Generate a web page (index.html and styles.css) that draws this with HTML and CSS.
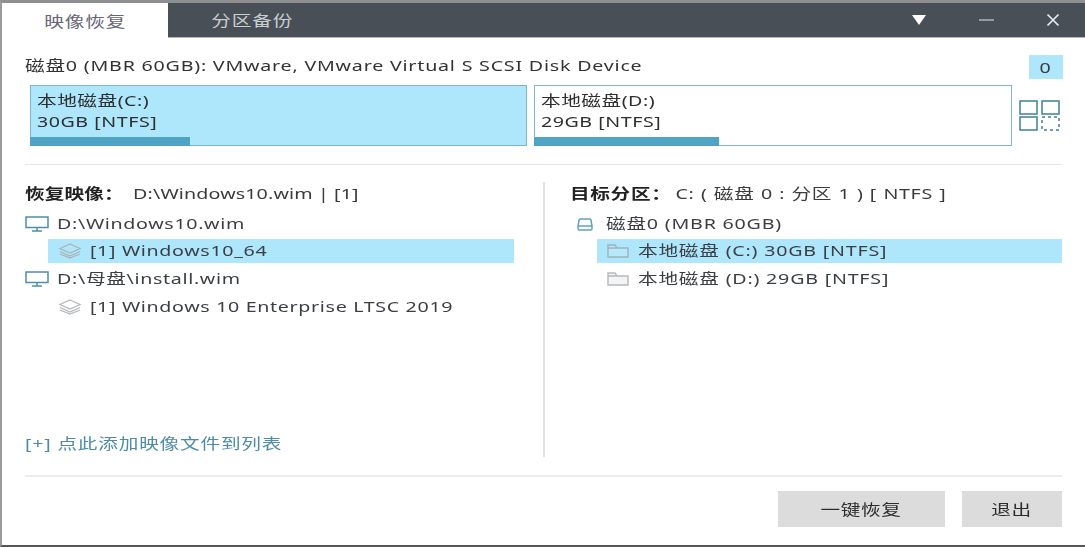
FILE: index.html
```html
<!DOCTYPE html>
<html lang="zh-CN">
<head>
<meta charset="utf-8">
<title>映像恢复</title>
<link rel="stylesheet" href="styles.css">
</head>
<body>
<div class="window">
  <header class="titlebar">
    <div class="tab active"><span class="t tc">映像恢复</span></div>
    <div class="tab"><span class="t tc">分区备份</span></div>
    <div class="controls">
      <svg class="ctl" width="16" height="12" viewBox="0 0 16 12"><path d="M1 1h14L8 11z" fill="#fff"/></svg>
      <svg class="ctl" width="16" height="12" viewBox="0 0 16 12"><path d="M0 6h15" stroke="#aab0b5" stroke-width="1.6"/></svg>
      <svg class="ctl" width="14" height="14" viewBox="0 0 14 14"><path d="M1.500 1.500l11 11M12.500 1.500l-11 11" stroke="#e8ebed" stroke-width="1.700" fill="none"/></svg>
    </div>
  </header>
  <main class="content">
    <div class="disk-head">
      <span class="t">磁盘0 (MBR 60GB): VMware, VMware Virtual S SCSI Disk Device</span>
      <span class="badge"><span class="t tc">0</span></span>
    </div>
    <div class="parts">
      <div class="part selected part-c">
        <div class="part-label"><span class="t">本地磁盘(C:)</span></div>
        <div class="part-label"><span class="t">30GB [NTFS]</span></div>
        <div class="usage" style="width:160px"></div>
      </div>
      <div class="part part-d">
        <div class="part-label"><span class="t">本地磁盘(D:)</span></div>
        <div class="part-label"><span class="t">29GB [NTFS]</span></div>
        <div class="usage" style="width:185px"></div>
      </div>
      <svg class="layout-icon" width="42" height="31" viewBox="0 0 42 31">
        <g fill="none" stroke="#3f7f99" stroke-width="1.500">
          <rect x="1" y="1" width="17" height="13"/>
          <rect x="23" y="1" width="17" height="13"/>
          <rect x="1" y="17" width="17" height="13"/>
          <rect x="23" y="17" width="17" height="13" stroke-dasharray="3 3"/>
        </g>
      </svg>
    </div>
    <div class="rule"></div>
    <div class="panes">
      <section class="pane left">
        <div class="pane-title"><span class="t"><b>恢复映像：</b>D:\Windows10.wim | [1]</span></div>
        <div class="row">
          <svg class="ico" width="24" height="16" viewBox="0 0 24 16"><g fill="none" stroke="#4f8ea8" stroke-width="1.500"><rect x="1" y="1" width="22" height="10.500"/><path d="M12 11.500v3M7 15h10"/></g></svg>
          <span class="t">D:\Windows10.wim</span>
        </div>
        <div class="row sub selected">
          <svg class="ico" width="24" height="16" viewBox="0 0 24 16"><g fill="none" stroke="#a9b4b8" stroke-width="1.300"><path d="M12 1l10 4.500-10 4.500L2 5.500z"/><path d="M2 8.500l10 4.500 10-4.500M2 11l10 4 10-4"/></g></svg>
          <span class="t">[1] Windows10_64</span>
        </div>
        <div class="row">
          <svg class="ico" width="24" height="16" viewBox="0 0 24 16"><g fill="none" stroke="#4f8ea8" stroke-width="1.500"><rect x="1" y="1" width="22" height="10.500"/><path d="M12 11.500v3M7 15h10"/></g></svg>
          <span class="t">D:\母盘\install.wim</span>
        </div>
        <div class="row sub">
          <svg class="ico" width="24" height="16" viewBox="0 0 24 16"><g fill="none" stroke="#b4b9bb" stroke-width="1.300"><path d="M12 1l10 4.500-10 4.500L2 5.500z"/><path d="M2 8.500l10 4.500 10-4.500M2 11l10 4 10-4"/></g></svg>
          <span class="t">[1] Windows 10 Enterprise LTSC 2019</span>
        </div>
        <div class="add"><span class="t">[+] 点此添加映像文件到列表</span></div>
      </section>
      <section class="pane right">
        <div class="pane-title"><span class="t"><b>目标分区：</b>C: ( 磁盘 0 : 分区 1 ) [ NTFS ]</span></div>
        <div class="row">
          <svg class="ico disk" width="16" height="13" viewBox="0 0 16 13"><g fill="none" stroke="#5fa0bd" stroke-width="1.500"><path d="M3.500 1h9a1.500 1.500 0 0 1 1.500 1.500L15 8v2.500a1.500 1.500 0 0 1-1.500 1.500h-11A1.500 1.500 0 0 1 1 10.500V8l1-5.500A1.500 1.500 0 0 1 3.500 1z"/><path d="M1 8h14"/></g></svg>
          <span class="t">磁盘0 (MBR 60GB)</span>
        </div>
        <div class="row sub selected">
          <svg class="ico folder" width="22" height="14" viewBox="0 0 22 14"><path d="M1 13V1h7l2 3h11v9zM1 4h9" fill="#ffffff22" stroke="#9fb3bb" stroke-width="1.400"/></svg>
          <span class="t">本地磁盘 (C:) 30GB [NTFS]</span>
        </div>
        <div class="row sub">
          <svg class="ico folder" width="22" height="14" viewBox="0 0 22 14"><path d="M1 13V1h7l2 3h11v9zM1 4h9" fill="#f4f4f4" stroke="#b4b9bb" stroke-width="1.400"/></svg>
          <span class="t">本地磁盘 (D:) 29GB [NTFS]</span>
        </div>
      </section>
    </div>
    <div class="rule foot-rule"></div>
    <footer class="foot">
      <button class="btn primary"><span class="t tc">一键恢复</span></button>
      <button class="btn exit"><span class="t tc">退出</span></button>
    </footer>
  </main>
</div>
</body>
</html>
```
FILE: styles.css
```css
* { box-sizing: border-box; }
html, body { margin: 0; height: 100%; background: #fff; overflow: hidden; }
body {
  font-family: "Noto Sans", "Noto Sans CJK SC", sans-serif;
  font-size: 15px;
  line-height: 20px;
  color: #3a3a3a;
}
.t {
  display: inline-block;
  white-space: nowrap;
  transform: scaleX(1.31);
  transform-origin: left center;
}
.tc { transform-origin: center; }
.t b { font-weight: 700; color: #222; margin-right: 3px; }
.window {
  height: 547px;
  display: flex;
  flex-direction: column;
  border-top: 3px solid #8d8f91;
  border-left: 2px solid #9a9a9a;
  border-bottom: 2px solid #555;
  filter: blur(0.4px);
}
.titlebar {
  height: 35px;
  flex: none;
  display: flex;
  background: #484f57;
  border-bottom: 1px solid #b5b8ba;
  color: #c9ced2;
}
.tab {
  width: 166px;
  display: flex;
  align-items: center;
  justify-content: center;
  letter-spacing: 0.600px;
}
.tab + .tab { width: 172px; margin-left: -2px; }
.tab.active { background: #fff; color: #667; margin-bottom: -1px; }
.controls {
  margin-left: auto;
  width: 174px;
  display: flex;
  align-items: center;
  padding-right: 25px;
  justify-content: space-between;
}
.content {
  flex: 1;
  display: flex;
  flex-direction: column;
  padding: 0 23px;
}
.disk-head {
  display: flex;
  justify-content: space-between;
  height: 47px;
  padding-top: 17px;
  letter-spacing: 0.600px;
}
.disk-head > .t { color: #333; }
.badge {
  width: 34px;
  height: 24px;
  background: #aee6fb;
  display: flex;
  align-items: center;
  justify-content: center;
  margin-right: -1px;
}
.parts {
  display: flex;
  align-items: center;
  height: 61px;
  margin-left: 5px;
}
.part {
  position: relative;
  height: 61px;
  border: 1px solid #7db6cf;
  padding: 4px 6px 0;
  letter-spacing: 0.400px;
}
.part-c { width: 497px; margin-right: 7px; }
.part-d { width: 478px; margin-right: 7px; }
.part.selected { background: #aee6fb; }
.part-label { height: 21px; color: #2f2f2f; }
.usage {
  position: absolute;
  left: -1px;
  bottom: -1px;
  height: 9px;
  background: #4fa3c4;
}
.rule { height: 1px; background: #e6e6e6; flex: none; margin-top: 18px; }
.panes {
  height: 275px;
  margin-top: 17px;
  flex: none;
  display: flex;
}
.pane { display: flex; flex-direction: column; letter-spacing: 0.500px; }
.pane.left { width: 520px; border-right: 2px solid #e2e2e2; }
.pane.right { flex: 1; padding-left: 25px; }
.pane-title { height: 28px; padding-top: 1px; }
.pane.left .pane-title { letter-spacing: 0.100px; }
.pane.left .pane-title b { margin-right: 7px; }
.pane.right .pane-title { word-spacing: 0.500px; }
.row {
  height: 28px;
  display: flex;
  align-items: center;
  gap: 8px;
  color: #3b3f44;
}
.row .t { position: relative; top: -1px; }
.row.sub { padding-left: 33px; }
.pane.left .row.sub { margin-left: 23px; margin-right: 29px; padding-left: 10px; }
.pane.right .row { padding-left: 7px; letter-spacing: 0.600px; }
.pane.right .row.sub { margin-left: 27px; padding-left: 10px; gap: 9px; }
.pane.right .row > .disk { margin-right: 5px; }
.row.selected { background: #aee6fb; height: 24px; margin-top: 1px; margin-bottom: 2px; }
.ico { flex: none; }
.add {
  margin-top: auto;
  padding-bottom: 4px;
  color: #4d8ba8;
  letter-spacing: 0.600px;
}
.foot-rule { margin-top: 18px; background: #ececec; height: 2px; }
.foot {
  display: flex;
  justify-content: flex-end;
  gap: 17px;
  margin-top: 14px;
}
.btn {
  height: 36px;
  border: 0;
  background: #dcdcdc;
  color: #2c2c2c;
  font: inherit;
  padding: 0;
  letter-spacing: 0.500px;
}
.btn.primary { width: 167px; }
.btn.exit { width: 100px; }
```
